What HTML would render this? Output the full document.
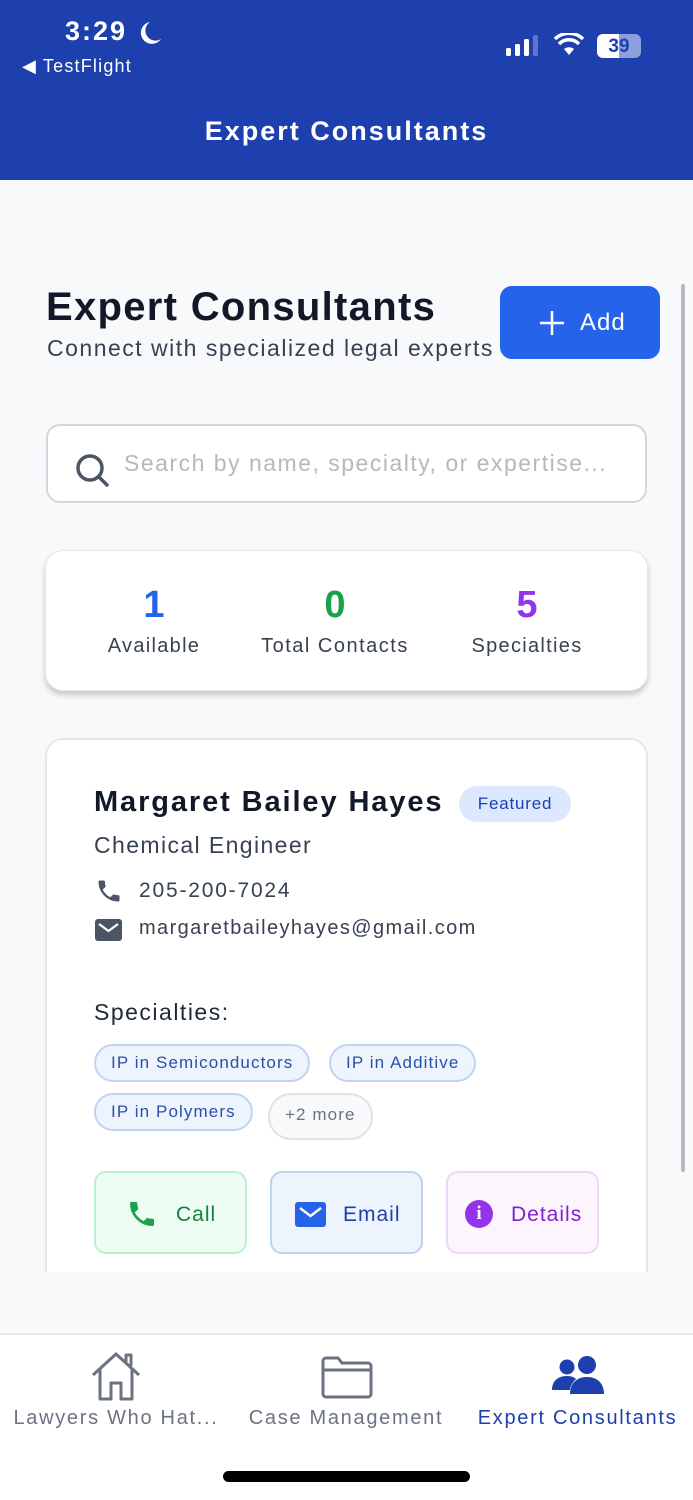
<!DOCTYPE html>
<html><head><meta charset="utf-8"><style>
*{margin:0;padding:0;box-sizing:border-box}
body{width:693px;height:1500px;position:relative;overflow:hidden;background:#f8f9fb;font-family:"Liberation Sans",sans-serif;}
.a{position:absolute;white-space:nowrap}
.chip{position:absolute;height:38px;border-radius:19px;border:2px solid #bfd4f2;background:#eef4fd;color:#2a4fa8;font-size:17px;letter-spacing:1.1px;line-height:34px;padding:0 15px}
.btn{position:absolute;top:1171px;width:153px;height:83px;border-radius:12px;border:2px solid;font-size:21px;letter-spacing:1px}
.nav{letter-spacing:1.7px}
</style></head><body>
<div class="a" style="left:0;top:0;width:693px;height:180px;background:#1e3fae"></div>
<div class="a" style="left:65px;top:16px;color:#fff;font-size:27px;font-weight:bold;letter-spacing:2px">3:29</div>
<svg class="a" style="left:138px;top:20px" width="24" height="26" viewBox="0 0 24 26"><path d="M12 2 A11 11 0 1 0 23 19 A9 9 0 0 1 12 2Z" fill="#fff"/></svg>
<div class="a" style="left:22px;top:56px;color:#fff;font-size:18px;letter-spacing:1.2px">◀ TestFlight</div>
<svg class="a" style="left:506px;top:35px" width="40" height="22"><rect x="0" y="13" width="5" height="8" rx="1.5" fill="#fff"/><rect x="9" y="9" width="5" height="12" rx="1.5" fill="#fff"/><rect x="18" y="4" width="5" height="17" rx="1.5" fill="#fff"/><rect x="27" y="0" width="5" height="21" rx="1.5" fill="#5d76c8"/></svg>
<svg class="a" style="left:554px;top:33px" width="30" height="24" viewBox="0 0 30 24"><path d="M15 22 L10 16 A8 8 0 0 1 20 16Z" fill="#fff"/><path d="M5 11 A14 14 0 0 1 25 11" stroke="#fff" stroke-width="3.5" fill="none"/><path d="M1 6 A20 20 0 0 1 29 6" stroke="#fff" stroke-width="3.5" fill="none"/></svg>
<div class="a" style="left:597px;top:34px;width:44px;height:24px;border-radius:6px;background:#8da0dd"></div>
<div class="a" style="left:597px;top:34px;width:22px;height:24px;border-radius:6px 0 0 6px;background:#fff"></div>
<div class="a" style="left:597px;top:36px;width:44px;text-align:center;color:#1e3fae;font-size:19px;font-weight:bold">39</div>
<div class="a" style="left:0;top:116px;width:693px;text-align:center;color:#fff;font-size:27px;font-weight:bold;letter-spacing:2px">Expert Consultants</div>

<div class="a" style="left:46px;top:285px;color:#111827;font-size:40px;font-weight:bold;letter-spacing:1.3px">Expert Consultants</div>
<div class="a" style="left:47px;top:335px;color:#374151;font-size:23px;letter-spacing:1.5px">Connect with specialized legal experts</div>
<div class="a" style="left:500px;top:286px;width:160px;height:73px;background:#2563eb;border-radius:12px;color:#fff;font-size:24px;letter-spacing:1px;line-height:73px;padding-left:80px">Add</div>
<svg class="a" style="left:538px;top:309px" width="28" height="28"><path d="M14 2V26M2 14H26" stroke="#fff" stroke-width="2.5"/></svg>
<div class="a" style="left:681px;top:284px;width:4px;height:888px;background:#b8b9bd;border-radius:2px"></div>

<div class="a" style="left:46px;top:424px;width:601px;height:79px;background:#fff;border:2px solid #d4d6db;border-radius:14px"></div>
<svg class="a" style="left:74px;top:452px" width="38" height="38"><circle cx="16" cy="16" r="12" stroke="#4b5563" stroke-width="3.5" fill="none"/><path d="M25 25L33 33" stroke="#4b5563" stroke-width="3.5" stroke-linecap="round"/></svg>
<div class="a" style="left:124px;top:450px;color:#b4b8c0;font-size:23px;letter-spacing:1.5px">Search by name, specialty, or expertise...</div>

<div class="a" style="left:45px;top:550px;width:603px;height:141px;background:#fff;border:1px solid #e5e7eb;border-radius:18px;box-shadow:0 4px 6px rgba(0,0,0,.2)"></div>
<div class="a" style="left:104px;top:584px;width:100px;text-align:center;color:#2563eb;font-size:38px;font-weight:bold">1</div>
<div class="a" style="left:74px;top:635px;width:160px;text-align:center;color:#374151;font-size:20px;letter-spacing:1.3px">Available</div>
<div class="a" style="left:285px;top:584px;width:100px;text-align:center;color:#16a34a;font-size:38px;font-weight:bold">0</div>
<div class="a" style="left:245px;top:635px;width:180px;text-align:center;color:#374151;font-size:20px;letter-spacing:1.5px">Total Contacts</div>
<div class="a" style="left:477px;top:584px;width:100px;text-align:center;color:#9333ea;font-size:38px;font-weight:bold">5</div>
<div class="a" style="left:437px;top:635px;width:180px;text-align:center;color:#374151;font-size:20px;letter-spacing:1.3px">Specialties</div>

<div class="a" style="left:45px;top:738px;width:603px;height:560px;background:#fff;border:2px solid #e5e7eb;border-radius:18px"></div>
<div class="a" style="left:0;top:1272px;width:693px;height:62px;background:#f8f9fb"></div>
<div class="a" style="left:94px;top:786px;color:#111827;font-size:29px;font-weight:bold;letter-spacing:1.9px">Margaret Bailey Hayes</div>
<div class="a" style="left:459px;top:786px;width:112px;height:36px;border-radius:18px;background:#dbe8fd;color:#1e40af;font-size:17px;letter-spacing:0.8px;line-height:36px;text-align:center">Featured</div>
<div class="a" style="left:94px;top:832px;color:#374151;font-size:23px;letter-spacing:1.4px">Chemical Engineer</div>
<svg class="a" style="left:95px;top:877px" width="28" height="28" viewBox="0 0 24 24"><path d="M6.6 10.8c1.4 2.8 3.8 5.1 6.6 6.6l2.2-2.2c.3-.3.7-.4 1-.2 1.1.4 2.3.6 3.6.6.6 0 1 .4 1 1V20c0 .6-.4 1-1 1C10.6 21 3 13.4 3 4c0-.6.4-1 1-1h3.5c.6 0 1 .4 1 1 0 1.3.2 2.5.6 3.6.1.3 0 .7-.2 1z" fill="#4b5563"/></svg>
<div class="a" style="left:139px;top:879px;color:#374151;font-size:21px;letter-spacing:1.8px">205-200-7024</div>
<div class="a" style="left:95px;top:919px;width:27px;height:22px;background:#4b5563;border-radius:3px"></div>
<svg class="a" style="left:95px;top:919px" width="27" height="22"><path d="M4 5L13.5 12L23 5" stroke="#fff" stroke-width="2.2" fill="none"/></svg>
<div class="a" style="left:139px;top:917px;color:#374151;font-size:20px;letter-spacing:1.4px">margaretbaileyhayes@gmail.com</div>
<div class="a" style="left:94px;top:999px;color:#1f2937;font-size:23px;letter-spacing:1.5px">Specialties:</div>
<div class="chip" style="left:94px;top:1044px">IP in Semiconductors</div>
<div class="chip" style="left:329px;top:1044px">IP in Additive</div>
<div class="chip" style="left:94px;top:1093px">IP in Polymers</div>
<div class="chip" style="left:268px;top:1093px;background:#f8f9fb;border-color:#e0e2e6;color:#6b7280;height:47px;line-height:40px;border-radius:24px">+2 more</div>

<div class="btn" style="left:94px;border-color:#bbf0cf;background:#eefdf3;color:#15803d"><span class="a" style="left:80px;top:30px">Call</span></div>
<svg class="a" style="left:126px;top:1198px" width="32" height="32" viewBox="0 0 24 24"><path d="M6.6 10.8c1.4 2.8 3.8 5.1 6.6 6.6l2.2-2.2c.3-.3.7-.4 1-.2 1.1.4 2.3.6 3.6.6.6 0 1 .4 1 1V20c0 .6-.4 1-1 1C10.6 21 3 13.4 3 4c0-.6.4-1 1-1h3.5c.6 0 1 .4 1 1 0 1.3.2 2.5.6 3.6.1.3 0 .7-.2 1z" fill="#16a34a"/></svg>
<div class="btn" style="left:270px;border-color:#bdd2ef;background:#eef4fd;color:#1e40af"><span class="a" style="left:71px;top:30px">Email</span></div>
<div class="a" style="left:295px;top:1202px;width:31px;height:25px;background:#2563eb;border-radius:3px"></div>
<svg class="a" style="left:295px;top:1202px" width="31" height="25"><path d="M5 6L15.5 14L26 6" stroke="#fff" stroke-width="2.4" fill="none"/></svg>
<div class="btn" style="left:446px;border-color:#ecd7f6;background:#fcf5fe;color:#7e22ce"><span class="a" style="left:63px;top:30px">Details</span></div>
<div class="a" style="left:465px;top:1200px;width:28px;height:28px;border-radius:50%;background:#9333ea;color:#fff;font-size:19px;font-weight:bold;text-align:center;line-height:28px;font-family:'Liberation Serif',serif">i</div>

<div class="a" style="left:0;top:1333px;width:693px;height:167px;background:#fff;border-top:2px solid #e8e9ec"></div>
<svg class="a" style="left:89px;top:1351px" width="54" height="50" viewBox="0 0 54 50"><path d="M4 24L27 3L50 24M11 18V48H22V32H32V48H43V18M37 11V4H42V15" stroke="#6b7280" stroke-width="3" fill="none" stroke-linejoin="round"/></svg>
<div class="a nav" style="left:0;top:1407px;width:232px;text-align:center;color:#6b7280;font-size:20px">Lawyers Who Hat...</div>
<svg class="a" style="left:320px;top:1355px" width="54" height="44"><path d="M3 6a3 3 0 0 1 3-3h12l4 5h26a3 3 0 0 1 3 3v28a3 3 0 0 1-3 3H6a3 3 0 0 1-3-3z M3 15H51" stroke="#6b7280" stroke-width="3" fill="none"/></svg>
<div class="a nav" style="left:240px;top:1407px;width:212px;text-align:center;color:#6b7280;font-size:20px">Case Management</div>
<svg class="a" style="left:550px;top:1355px" width="56" height="42"><circle cx="17" cy="12" r="7.5" fill="#1e3fae"/><circle cx="37" cy="10" r="9" fill="#1e3fae"/><path d="M2 35C2 25 9 21 17 21C21 21 24 22 26 24C22 28 20 32 20 35Z" fill="#1e3fae"/><path d="M20 39C20 28 27 22 37 22C47 22 54 28 54 39Z" fill="#1e3fae"/></svg>
<div class="a nav" style="left:462px;top:1407px;width:231px;text-align:center;color:#1e3fae;font-size:20px">Expert Consultants</div>
<div class="a" style="left:223px;top:1471px;width:247px;height:11px;background:#000;border-radius:6px"></div>
</body></html>
